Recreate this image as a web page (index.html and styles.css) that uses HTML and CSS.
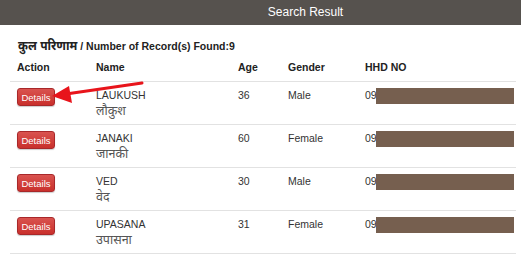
FILE: index.html
```html
<!DOCTYPE html>
<html lang="hi">
<head>
  <meta charset="utf-8">
  <meta name="viewport" content="width=device-width, initial-scale=1.0">
  <title>Search Result</title>
  <link rel="stylesheet" href="styles.css">
</head>
<body>
  <!-- Title bar -->
  <div class="title-bar">Search Result</div>

  <div class="content">
    <p class="count"><span class="count-hi">कुल परिणाम</span> / Number of Record(s) Found:9</p>

    <!-- Result table -->
    <div class="results">
      <div class="row head">
        <div class="cell">Action</div>
        <div class="cell">Name</div>
        <div class="cell">Age</div>
        <div class="cell">Gender</div>
        <div class="cell">HHD NO</div>
      </div>

      <div class="row">
        <div class="cell"><button class="btn-details">Details</button></div>
        <div class="cell">LAUKUSH<span class="hindi">लौकुश</span></div>
        <div class="cell">36</div>
        <div class="cell">Male</div>
        <div class="cell hhd">09<span class="redact"></span></div>
      </div>

      <div class="row">
        <div class="cell"><button class="btn-details">Details</button></div>
        <div class="cell">JANAKI<span class="hindi">जानकी</span></div>
        <div class="cell">60</div>
        <div class="cell">Female</div>
        <div class="cell hhd">09<span class="redact"></span></div>
      </div>

      <div class="row">
        <div class="cell"><button class="btn-details">Details</button></div>
        <div class="cell">VED<span class="hindi">वेद</span></div>
        <div class="cell">30</div>
        <div class="cell">Male</div>
        <div class="cell hhd">09<span class="redact"></span></div>
      </div>

      <div class="row">
        <div class="cell"><button class="btn-details">Details</button></div>
        <div class="cell">UPASANA<span class="hindi">उपासना</span></div>
        <div class="cell">31</div>
        <div class="cell">Female</div>
        <div class="cell hhd">09<span class="redact"></span></div>
      </div>
    </div>
  </div>

  <!-- Annotation arrow pointing at the first Details button -->
  <svg class="arrow" width="521" height="255" viewBox="0 0 521 255">
    <line x1="142" y1="83" x2="66" y2="94" stroke="#e8141b" stroke-width="3" stroke-linecap="round"/>
    <polygon points="52,96 69,86 72,103" fill="#e8141b"/>
  </svg>
</body>
</html>
```

FILE: styles.css
```css
/* Base */
body {
  margin: 0;
  font-family: "Liberation Sans", Arial, "Noto Sans", sans-serif;
  font-size: 10.5px;
  color: #333;
  background: #fff;
  overflow: hidden;
}

/* Dark title bar */
.title-bar {
  height: 25px;
  line-height: 25px;
  background: #56524e;
  color: #fff;
  font-size: 12px;
  text-align: center;
  padding-left: 90px;
}

.content {
  padding: 0 5px 0 10px;
}

.count {
  height: 15px;
  margin: 14px 0 2px 8px;
  line-height: 15px;
  font-weight: bold;
  color: #222;
}

.count-hi {
  font-size: 12px;
}

/* Table layout */
.row {
  display: grid;
  grid-template-columns: 79px 142px 50px 77px 1fr;
  line-height: 15px;
}

.row .cell {
  padding: 6px 7px 6px 7px;
}

.row.head .cell {
  padding: 4px 7px 6px 7px;
  font-weight: bold;
  color: #222;
}

.row + .row {
  border-top: 1px solid #e2e2e2;
}

.results .row:last-child {
  border-bottom: 1px solid #e2e2e2;
}

.hindi {
  display: block;
  height: 15px;
  line-height: 16px;
  font-size: 12.5px;
  color: #555;
}

/* Red Details button */
.btn-details {
  display: block;
  width: 38px;
  height: 18px;
  padding: 0;
  font-family: "Liberation Sans", Arial, sans-serif;
  font-size: 9.5px;
  color: #fff;
  background: linear-gradient(#d9534f, #c9302c);
  border: 1px solid #a8282a;
  border-radius: 3px;
  box-shadow: 0 1px 1px rgba(0, 0, 0, 0.2);
}

/* Masked HHD number */
.hhd {
  display: flex;
  align-items: flex-start;
}

.redact {
  display: inline-block;
  width: 138px;
  height: 16px;
  margin-left: -1px;
  background: #765f4f;
}

/* Overlay arrow */
.arrow {
  position: absolute;
  top: 0;
  left: 0;
  pointer-events: none;
}
```
